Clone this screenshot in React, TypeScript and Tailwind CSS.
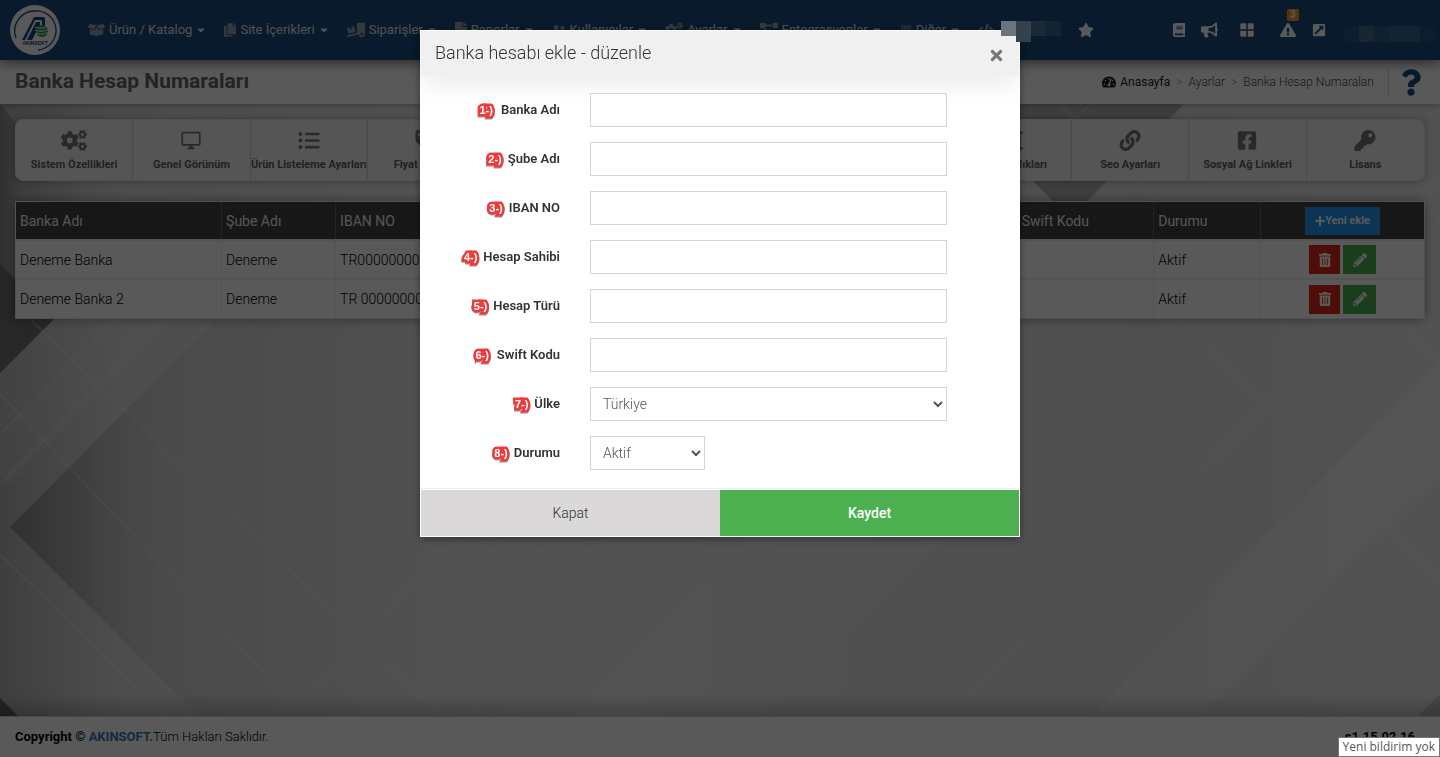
import React, { useState } from 'react';
import {
  FaBook,
  FaBoxOpen,
  FaBullhorn,
  FaCaretDown,
  FaCode,
  FaCogs,
  FaCopy,
  FaCreditCard,
  FaEnvelope,
  FaExclamationTriangle,
  FaExternalLinkSquareAlt,
  FaFacebookSquare,
  FaFile,
  FaHeading,
  FaImage,
  FaKey,
  FaLink,
  FaListUl,
  FaPencilAlt,
  FaPlus,
  FaProjectDiagram,
  FaQuestion,
  FaStar,
  FaTachometerAlt,
  FaTag,
  FaTimes,
  FaTrashAlt,
  FaTruck,
  FaTruckLoading,
  FaUserFriends,
} from 'react-icons/fa';
import { MdOutlineDesktopWindows, MdOutlineGridView, MdWindow } from 'react-icons/md';

const menu = [
  { label: 'Ürün / Katalog', icon: FaBoxOpen, size: 'w-[17px]' },
  { label: 'Site İçerikleri', icon: FaCopy, size: 'w-3' },
  { label: 'Siparişler', icon: FaTruckLoading, size: 'w-[18px]' },
  { label: 'Raporlar', icon: FaFile, size: 'w-3' },
  { label: 'Kullanıcılar', icon: FaUserFriends, size: 'w-3.5' },
  { label: 'Ayarlar', icon: FaCogs, size: 'w-[18px]' },
  { label: 'Entegrasyonlar', icon: FaProjectDiagram, size: 'w-[18px]' },
  { label: 'Diğer', icon: MdOutlineGridView, size: 'w-3' },
];

const shortcuts = [
  { label: 'Sistem Özellikleri', icon: FaCogs },
  { label: 'Genel Görünüm', icon: MdOutlineDesktopWindows },
  { label: 'Ürün Listeleme Ayarları', icon: FaListUl },
  { label: 'Fiyat Ayarları', icon: FaTag },
  { label: 'Kargo', icon: FaTruck },
  { label: 'Ödeme', icon: FaCreditCard },
  { label: 'Mail', icon: FaEnvelope },
  { label: 'Resim', icon: FaImage },
  { label: 'Site Başlıkları', icon: FaHeading },
  { label: 'Seo Ayarları', icon: FaLink },
  { label: 'Sosyal Ağ Linkleri', icon: FaFacebookSquare },
  { label: 'Lisans', icon: FaKey },
];

const accounts = [
  { bank: 'Deneme Banka', branch: 'Deneme', iban: 'TR0000000000', status: 'Aktif' },
  { bank: 'Deneme Banka 2', branch: 'Deneme', iban: 'TR 0000000000', status: 'Aktif' },
];

const fields = [
  { id: 'bank', no: '1-)', label: 'Banka Adı', gap: 'gap-1.5' },
  { id: 'branch', no: '2-)', label: 'Şube Adı', gap: 'gap-1' },
  { id: 'iban', no: '3-)', label: 'IBAN NO', gap: 'gap-1' },
  { id: 'owner', no: '4-)', label: 'Hesap Sahibi', gap: 'gap-1' },
  { id: 'type', no: '5-)', label: 'Hesap Türü', gap: 'gap-1' },
  { id: 'swift', no: '6-)', label: 'Swift Kodu', gap: 'gap-1.5' },
];

const Logo = () => (
  <svg viewBox="0 0 50 50" className="h-[50px] w-[50px]" role="img" aria-label="AKINSOFT">
    <circle cx="25" cy="25" r="25" fill="#fff" />
    <path
      d="M6 33A20 20 0 0 1 25 6A19.500 19.500 0 0 1 35 43Q31 45 28 45"
      fill="none"
      stroke="#164a80"
      strokeWidth="1.3"
    />
    <path d="M12 35L24 12H33Q35 12 35 14V21H32V16L31 15H25L15 35Z" fill="#164a80" />
    <path d="M17 35L26 17H30V20L22 35Z" fill="#164a80" />
    <circle cx="32" cy="26" r="6" fill="#2ba048" />
    <path d="M25 22Q31 25 38 21M25 25Q32 28 39 24M26 28Q32 31 38 27" stroke="#fff" strokeWidth="1" fill="none" />
    <text x="25" y="40" textAnchor="middle" fontSize="5" fontWeight="900" fontFamily="Liberation Sans, sans-serif" fill="#164a80">
      AKINSOFT
    </text>
  </svg>
);

const Backdrop = () => (
  <svg viewBox="0 0 1440 612" preserveAspectRatio="none" className="absolute inset-0 h-full w-full" aria-hidden="true">
    <defs>
      <linearGradient id="base" x1="0" x2="1" y1="0" y2="0">
        <stop offset="0" stopColor="#b4b4b4" />
        <stop offset="0.08" stopColor="#dcdcdc" />
        <stop offset="0.3" stopColor="#ececec" />
        <stop offset="0.8" stopColor="#e2e2e2" />
        <stop offset="1" stopColor="#ececec" />
      </linearGradient>
      <linearGradient id="fold" x1="0" x2="1" y1="0" y2="0">
        <stop offset="0" stopColor="#000" stopOpacity="0.24" />
        <stop offset="0.25" stopColor="#000" stopOpacity="0.05" />
        <stop offset="1" stopColor="#000" stopOpacity="0" />
      </linearGradient>
      <linearGradient id="edge" x1="0" x2="0" y1="0" y2="1">
        <stop offset="0" stopColor="#000" stopOpacity="0" />
        <stop offset="1" stopColor="#000" stopOpacity="0.2" />
      </linearGradient>
    </defs>
    <rect width="1440" height="612" fill="url(#base)" />
    <path d="M0 0L90 104L0 194Z" fill="url(#fold)" />
    <path d="M0 160L54 215L0 269Z" fill="#707070" />
    <path d="M0 269L54 215H175L10 380L0 370Z" fill="#fff" fillOpacity="0.12" />
    <path d="M217 215L10 423L199 612H600V215Z" fill="url(#fold)" />
    <path d="M0 594L18 612H0Z" fill="#666" />
    <path d="M1010 0H1184L1070 114L1010 54Z" fill="#b4b4b4" />
    <path d="M780 400L570 612H760L980 400Z" fill="#fff" fillOpacity="0.2" />
    <path d="M1440 255L1090 612H1200L1440 372Z" fill="#fff" fillOpacity="0.3" />
    <path d="M1440 590L1418 612H1440Z" fill="#000" fillOpacity="0.15" />
    <g fill="none" stroke="#fff" strokeOpacity="0.22" strokeWidth="2">
      <path d="M0 290L305 612M0 330L115 215M0 380L165 215M30 215L440 612M290 612L450 440M0 450L165 612" />
      <path d="M1050 216L1200 370L1360 215M1180 216L1440 475M1280 216L1440 380M950 612L1350 216M1060 0L1230 170M1090 0L1070 20M1180 0L1440 260M1310 0L1440 120M1440 75L1340 180" />
    </g>
    <rect y="590" width="1440" height="22" fill="url(#edge)" />
  </svg>
);

const NumberMark = ({ children }: { children: React.ReactNode }) => (
  <span
    aria-hidden="true"
    className="px-0.5 font-['Liberation_Sans',sans-serif] text-[11px] leading-4 font-bold text-white drop-shadow-[0_1px_0_rgba(0,0,0,0.4)] [-webkit-text-stroke:5px_#ee3b3b] [paint-order:stroke_fill] [stroke-linejoin:round]"
  >
    {children}
  </span>
);

const Header = () => (
  <header className="relative z-10 flex h-[60px] items-center bg-[#174a7b] text-white shadow-[0_2px_12px_rgba(0,0,0,0.6)]">
    <a href="#" className="ml-2.5 shrink-0">
      <Logo />
    </a>
    <nav className="ml-7 flex items-center gap-[18px] text-[13px] whitespace-nowrap text-gray-200">
      {menu.map(({ label, icon: Icon, size }) => (
        <a key={label} href="#" className="flex items-center">
          <Icon className={`mr-1 h-4 text-gray-400 ${size}`} />
          {label}
          <FaCaretDown className="ml-1 h-3 w-2.5" />
        </a>
      ))}
      <a href="#" aria-label="Kod">
        <FaCode className="h-4 w-4 text-gray-400" />
      </a>
    </nav>
    <div className="absolute right-[5px] flex h-full items-center">
      <a href="#" aria-label="Favoriler" className="mr-[78px]">
        <FaStar className="h-4 w-4" />
      </a>
      <a href="#" aria-label="Kılavuz" className="mr-[15px]">
        <FaBook className="h-3.5 w-3.5" />
      </a>
      <a href="#" aria-label="Duyurular" className="mr-5">
        <FaBullhorn className="h-4 w-[17px]" />
      </a>
      <a href="#" aria-label="Modüller" className="mr-6">
        <MdWindow className="h-[18px] w-[18px]" />
      </a>
      <a href="#" aria-label="Uyarılar" className="relative mr-4">
        <FaExclamationTriangle className="h-4 w-4" />
        <span className="absolute -top-[13px] left-[7px] rounded-xs bg-[#f39c12] px-[3px] text-[10px] leading-3 font-bold">3</span>
      </a>
      <a href="#" aria-label="Siteye git" className="mr-[18px]">
        <FaExternalLinkSquareAlt className="h-3.5 w-3.5" />
      </a>
      <div className="mt-2 grid h-4 w-[91px] grid-cols-6">
        <span className="bg-white/5" />
        <span className="bg-white/20" />
        <span className="bg-white/10" />
        <span className="bg-white/15" />
        <span className="bg-white/15" />
        <span className="bg-white/5" />
      </div>
    </div>
  </header>
);

const AccountTable = () => (
  <div className="mt-5 border border-gray-200 bg-white shadow-[0_0_10px_rgba(0,0,0,0.4)]">
    <table className="w-full table-fixed text-left text-sm">
      <colgroup>
        <col className="w-[14.6%]" />
        <col className="w-[8.1%]" />
        <col className="w-[20%]" />
        <col className="w-[16%]" />
        <col />
        <col className="w-[9.7%]" />
        <col className="w-[7.6%]" />
        <col className="w-[11.6%]" />
      </colgroup>
      <thead className="bg-[#444] text-gray-100">
        <tr className="h-[38px]">
          {['Banka Adı', 'Şube Adı', 'IBAN NO', 'Hesap Sahibi', 'Hesap Türü', 'Swift Kodu', 'Durumu'].map((title) => (
            <th key={title} className="border-r border-[#666] px-1 font-normal">
              {title}
            </th>
          ))}
          <th className="text-center">
            <button type="button" className="inline-flex h-7 items-center bg-[#2196f3] px-2.5 text-[11px] font-bold text-white">
              <FaPlus className="h-3 w-2.5" />
              Yeni ekle
            </button>
          </th>
        </tr>
      </thead>
      <tbody className="font-light text-black">
        {accounts.map((account) => (
          <tr key={account.bank} className="h-[39px] border-t-2 border-[#eee]">
            <td className="border-r border-[#eee] px-1">{account.bank}</td>
            <td className="border-r border-[#eee] px-1">{account.branch}</td>
            <td className="border-r border-[#eee] px-1">{account.iban}</td>
            <td />
            <td />
            <td className="border-r border-[#eee] px-1" />
            <td className="border-r border-[#eee] px-1">{account.status}</td>
            <td>
              <div className="flex justify-center gap-[3px] text-white">
                <button type="button" aria-label="Sil" className="flex h-[29px] w-[31px] items-center justify-center bg-[#e0251b]">
                  <FaTrashAlt className="h-3.5 w-3.5" />
                </button>
                <button type="button" aria-label="Düzenle" className="flex h-[29px] w-[33px] items-center justify-center bg-[#4caf50]">
                  <FaPencilAlt className="h-3.5 w-3.5" />
                </button>
              </div>
            </td>
          </tr>
        ))}
      </tbody>
    </table>
  </div>
);

const AccountModal = () => {
  const [country, setCountry] = useState('Türkiye');
  const [status, setStatus] = useState('Aktif');

  return (
    <div className="fixed inset-0 z-20 bg-black/65">
      <form
        role="dialog"
        aria-labelledby="modal-title"
        className="relative mx-auto mt-[30px] max-w-[600px] border border-white bg-white text-sm shadow-[0_2px_8px_rgba(0,0,0,0.4)]"
      >
        <div className="flex h-[44px] items-center justify-between bg-[#f0f0f0] px-3.5 shadow-[0_10px_25px_rgba(0,0,0,0.08)]">
          <h2 id="modal-title" className="text-lg font-light text-[#333]">
            Banka hesabı ekle - düzenle
          </h2>
          <button type="button" aria-label="Kapat" className="mt-1 text-[#777]">
            <FaTimes className="h-[17px] w-[17px]" />
          </button>
        </div>
        <div className="space-y-[15px] border-b border-[#eee] pt-[18px] pr-[72px] pb-[18px]">
          {fields.map((field) => (
            <div key={field.id} className="grid grid-cols-[139px_1fr] items-center gap-[30px]">
              <label htmlFor={field.id} className={`flex items-center justify-end text-[13px] font-semibold text-[#333] ${field.gap}`}>
                <NumberMark>{field.no}</NumberMark>
                {field.label}
              </label>
              <input id={field.id} type="text" className="h-[34px] w-full border border-[#d0d3e0] bg-white px-3" />
            </div>
          ))}
          <div className="grid grid-cols-[139px_1fr] items-center gap-[30px]">
            <label htmlFor="country" className="flex items-center justify-end gap-1 text-[13px] font-semibold text-[#333]">
              <NumberMark>7-)</NumberMark>
              Ülke
            </label>
            <select
              id="country"
              value={country}
              onChange={(e) => setCountry(e.target.value)}
              className="h-[34px] w-full border border-[#d0d3e0] bg-white px-2 font-light text-[#555]"
            >
              <option>Türkiye</option>
            </select>
          </div>
          <div className="grid grid-cols-[139px_1fr] items-center gap-[30px]">
            <label htmlFor="status" className="flex items-center justify-end gap-1 text-[13px] font-semibold text-[#333]">
              <NumberMark>8-)</NumberMark>
              Durumu
            </label>
            <select
              id="status"
              value={status}
              onChange={(e) => setStatus(e.target.value)}
              className="h-[34px] w-[115px] border border-[#d0d3e0] bg-white px-2 font-light text-[#555]"
            >
              <option>Aktif</option>
              <option>Pasif</option>
            </select>
          </div>
        </div>
        <div className="mt-px grid grid-cols-2">
          <button type="button" className="h-[46px] bg-[#dad8d9] font-light text-[#333]">
            Kapat
          </button>
          <button type="button" className="h-[46px] bg-[#4caf50] font-medium text-white">
            Kaydet
          </button>
        </div>
        {/* blurred site name */}
        <div className="absolute -top-[10px] left-[580px] grid w-[60px] grid-cols-4" aria-hidden="true">
          <span className="h-[15px] bg-[#6a747d]" />
          <span className="h-[21px] bg-[#34424f]" />
          <span className="h-[15px] bg-[#1b2936]" />
          <span className="h-[15px] bg-[#142333]" />
        </div>
      </form>
    </div>
  );
};

const App = () => {
  return (
    <div className="flex min-h-screen flex-col overflow-x-hidden bg-white font-['Roboto','Noto_Sans',sans-serif]">
      <Header />
      <div className="relative z-[5] flex h-11 items-center justify-between bg-white px-[15px] shadow-[0_0_8px_rgba(0,0,0,0.4)]">
        <h1 className="text-[21px] font-bold text-[#666]">Banka Hesap Numaraları</h1>
        <div className="flex items-center text-xs font-light text-[#444]">
          <a href="#" className="flex items-center gap-1 font-normal text-[#222]">
            <FaTachometerAlt className="h-3.5 w-3.5" />
            Anasayfa
          </a>
          <span className="mx-1.5 text-gray-400">&gt;</span>
          <a href="#">Ayarlar</a>
          <span className="mx-1.5 text-gray-400">&gt;</span>
          <span>Banka Hesap Numaraları</span>
          <a href="#" aria-label="Yardım" className="mr-1 ml-3.5 border-l border-gray-300 pl-3 text-[#174a7b]">
            <FaQuestion className="h-[27px] w-5" />
          </a>
        </div>
      </div>

      <main className="relative flex-1 px-[15px] pt-[15px]">
        <Backdrop />
        <div className="relative">
          <nav className="grid grid-cols-12 overflow-hidden rounded-lg border border-gray-200 bg-[#f4f4f4] shadow-[0_0_10px_rgba(0,0,0,0.3)]">
            {shortcuts.map(({ label, icon: Icon }) => (
              <a
                key={label}
                href="#"
                className="flex h-[60px] flex-col items-center justify-center gap-1.5 border-r border-gray-300 pt-1 text-[11px] font-bold whitespace-nowrap text-[#606060] last:border-r-0"
              >
                <Icon className="h-[21px] w-[26px] shrink-0 text-[#777]" />
                {label}
              </a>
            ))}
          </nav>
          <AccountTable />
        </div>
      </main>

      <footer className="flex h-[41px] items-center justify-between border-t border-gray-300 bg-white px-[15px] text-[13px] text-black">
        <p className="font-light">
          <b className="font-bold">Copyright © </b>
          <a href="#" className="font-bold text-[#337ab7]">
            AKINSOFT.
          </a>
          Tüm Hakları Saklıdır.
        </p>
        <b className="mr-2.5">s1.15.02.16</b>
      </footer>

      <AccountModal />
      <div
        role="tooltip"
        className="fixed right-0 bottom-0 z-30 border border-[#767676] bg-white px-1 font-['Open_Sans','Noto_Sans',sans-serif] text-xs leading-[18px] text-[#575757]"
      >
        Yeni bildirim yok
      </div>
    </div>
  );
};

export default App;
